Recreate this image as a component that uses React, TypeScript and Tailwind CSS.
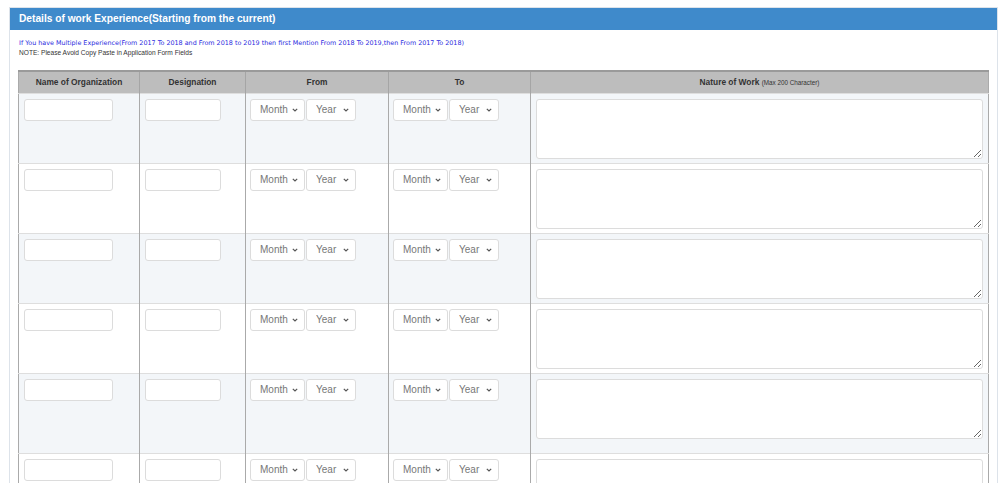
import React from 'react';

const rowHeights = [70, 70, 70, 70, 80, 70];

const SelectBox = ({ label, width }: { label: string; width: string }) => (
  <div className={`relative ${width} h-[22px]`}>
    <select
      defaultValue=""
      className="appearance-none block w-full h-[22px] leading-[20px] py-0 bg-white border border-[#dcdcdc] rounded-[3px] pl-[9px] text-[10px] text-[#777] outline-none"
    >
      <option value="">{label}</option>
    </select>
    <svg
      className="absolute right-[7px] top-1/2 -translate-y-1/2 pointer-events-none"
      width="6"
      height="4"
      viewBox="0 0 6 4"
    >
      <path d="M0.8 0.8L3 3L5.2 0.8" fill="none" stroke="#555" strokeWidth="1.2" />
    </svg>
  </div>
);

const MonthYear = () => (
  <div className="flex gap-px">
    <SelectBox label="Month" width="w-[55px]" />
    <SelectBox label="Year" width="w-[50px]" />
  </div>
);

const App: React.FC = () => {
  return (
    <div className="w-[1000px] h-[483px] overflow-hidden bg-white pt-[7px] pl-[9px] font-['Liberation_Sans',Arial,sans-serif]">
      <div className="w-[989px] border border-[#dde3ea] bg-white">
        {/* Panel heading */}
        <div className="h-[22px] bg-[#3f8acb] flex items-center pl-[9px]">
          <h3 className="text-white font-bold text-[10.2px]">
            Details of work Experience(Starting from the current)
          </h3>
        </div>

        <div className="px-[8px] pt-[9px]">
          <p className="text-[6.4px] leading-[9px] text-[#2a2ae0] font-['DejaVu_Sans',Verdana,sans-serif] pl-px">
            If You have Multiple Experience(From 2017 To 2018 and From 2018 to 2019 then first Mention From 2018 To 2019,then From 2017 To 2018)
          </p>
          <p className="text-[6.6px] leading-[9px] text-[#333] pl-px">
            NOTE: Please Avoid Copy Paste in Application Form Fields
          </p>

          <table className="mt-[13px] w-[971px] border-collapse table-fixed border-l border-r border-[#aaa]">
            <colgroup>
              <col className="w-[121px]" />
              <col className="w-[106px]" />
              <col className="w-[143px]" />
              <col className="w-[142px]" />
              <col />
            </colgroup>
            <thead>
              <tr className="h-[22px] bg-[#bdbdbd] border-t-2 border-[#9a9a9a] text-[8.4px] font-bold text-[#333]">
                <th className="border-r border-[#a5a5a5]">Name of Organization</th>
                <th className="border-r border-[#a5a5a5]">Designation</th>
                <th className="border-r border-[#a5a5a5]">From</th>
                <th className="border-r border-[#a5a5a5]">To</th>
                <th>
                  Nature of Work{' '}
                  <span className="font-normal text-[6.3px]">(Max 200 Character)</span>
                </th>
              </tr>
            </thead>
            <tbody>
              {rowHeights.map((h, i) => (
                <tr
                  key={i}
                  style={{ height: h }}
                  className={`${i % 2 === 0 ? 'bg-[#f3f6f9]' : 'bg-white'} border-t border-[#dedede] align-top`}
                >
                  <td className="border-r border-[#aaa] pt-[5px] pl-[5px]">
                    <input className="block w-[89px] h-[22px] bg-white border border-[#dcdcdc] rounded-[3px] outline-none" />
                  </td>
                  <td className="border-r border-[#aaa] pt-[5px] pl-[5px]">
                    <input className="block w-[76px] h-[22px] bg-white border border-[#dcdcdc] rounded-[3px] outline-none" />
                  </td>
                  <td className="border-r border-[#aaa] pt-[5px] pl-[4px]">
                    <MonthYear />
                  </td>
                  <td className="border-r border-[#aaa] pt-[5px] pl-[4px]">
                    <MonthYear />
                  </td>
                  <td className="pt-[5px] pl-[5px]">
                    <textarea className="block w-[447px] h-[60px] bg-white border border-[#dcdcdc] rounded-[3px] outline-none" />
                  </td>
                </tr>
              ))}
            </tbody>
          </table>
        </div>
      </div>
    </div>
  );
};

export default App;
